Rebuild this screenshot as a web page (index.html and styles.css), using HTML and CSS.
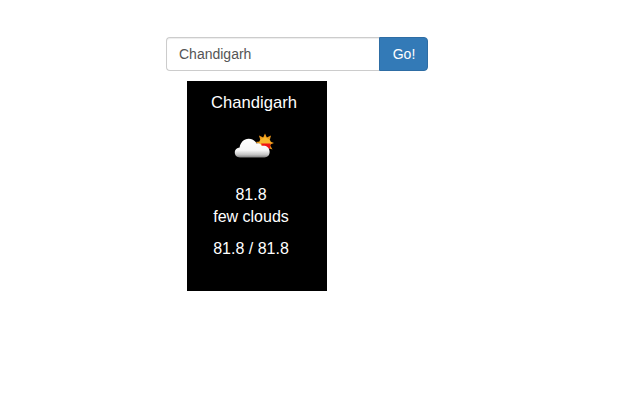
FILE: index.html
```html
<!DOCTYPE html>
<html lang="en">
<head>
<meta charset="utf-8">
<title>Weather</title>
<link rel="stylesheet" href="styles.css">
</head>
<body>
<main class="app">
  <form class="search">
    <input class="search-input" type="text" value="Chandigarh">
    <button class="search-btn" type="button">Go!</button>
  </form>
  <section class="card">
    <h2 class="city">Chandigarh</h2>
    <svg class="icon" width="42" height="28" viewBox="0 0 42 28" aria-hidden="true">
      <defs>
        <linearGradient id="cloud" x1="0" y1="0" x2="0" y2="1">
          <stop offset="0" stop-color="#ffffff"/>
          <stop offset="0.62" stop-color="#f6f6f6"/>
          <stop offset="0.85" stop-color="#c4c4c4"/>
          <stop offset="1" stop-color="#7e7e7e"/>
        </linearGradient>
      </defs>
      <g fill="#f09a1a">
        <path d="M31 1.5 L33 6 L29 6Z"/>
        <path d="M37 3.5 L35.8 8 L32.8 5.6Z"/>
        <path d="M25 3.5 L29.2 5.6 L26.4 8.2Z"/>
        <path d="M40 11 L35.6 12.8 L35.6 9.2Z"/>
        <path d="M21.5 10 L26 9.6 L25.6 12.6Z"/>
        <path d="M38.5 17.5 L34 16 L36 13.2Z"/>
      </g>
      <circle cx="31" cy="11" r="5.8" fill="#f8b62c"/>
      <path d="M27 11.5 L36.5 11.5 L36 16.5 L30 17Z" fill="#f01414"/>
      <path d="M6 25.5 C2.5 25.5 0.8 23.2 0.8 20.6 C0.8 17.8 3 15.8 5.6 15.6 C6.2 10.8 9.8 6.8 14.6 6.8 C18.4 6.8 21 8.6 22.6 11.4 C24.6 10.6 27 11.6 27.6 14 C31.6 13.2 35.4 15.2 35.6 19.6 C35.8 23.2 33.6 25.5 30.4 25.5Z" fill="url(#cloud)"/>
    </svg>
    <p class="temp">81.8<br>few clouds</p>
    <p class="range">81.8 / 81.8</p>
  </section>
</main>
</body>
</html>
```
FILE: styles.css
```css
* { box-sizing: border-box; }
html, body { margin: 0; padding: 0; background: #fff; }
body { font-family: "Liberation Sans", Arial, sans-serif; }
.app { padding: 37px 0 0 166px; }
.search { display: flex; width: 262px; height: 34px; }
.search-input {
  flex: 1;
  min-width: 0;
  height: 34px;
  padding: 6px 12px;
  font: 14px/20px "Liberation Sans", Arial, sans-serif;
  color: #555;
  background: #fff;
  border: 1px solid #ccc;
  border-right: 0;
  border-radius: 4px 0 0 4px;
  box-shadow: inset 0 1px 1px rgba(0,0,0,.075);
}
.search-btn {
  width: 49px;
  height: 34px;
  padding: 0 0 0 1px;
  font: 14px/20px "Liberation Sans", Arial, sans-serif;
  color: #fff;
  background: #337ab7;
  border: 1px solid #2e6da4;
  border-radius: 0 4px 4px 0;
}
.card {
  width: 140px;
  height: 210px;
  margin: 10px 0 0 21px;
  padding-top: 12px;
  background: #000;
  color: #fff;
  text-align: center;
  font-size: 16px;
  line-height: 22px;
}
.city { margin: 0; padding-right: 6px; font-size: 16.6px; font-weight: 400; line-height: 20px; }
.icon { display: block; margin: 19px 0 0 47px; }
.temp { margin: 24px 0 0; padding-right: 12px; }
.range { margin: 10px 0 0; padding-right: 12px; }
```
